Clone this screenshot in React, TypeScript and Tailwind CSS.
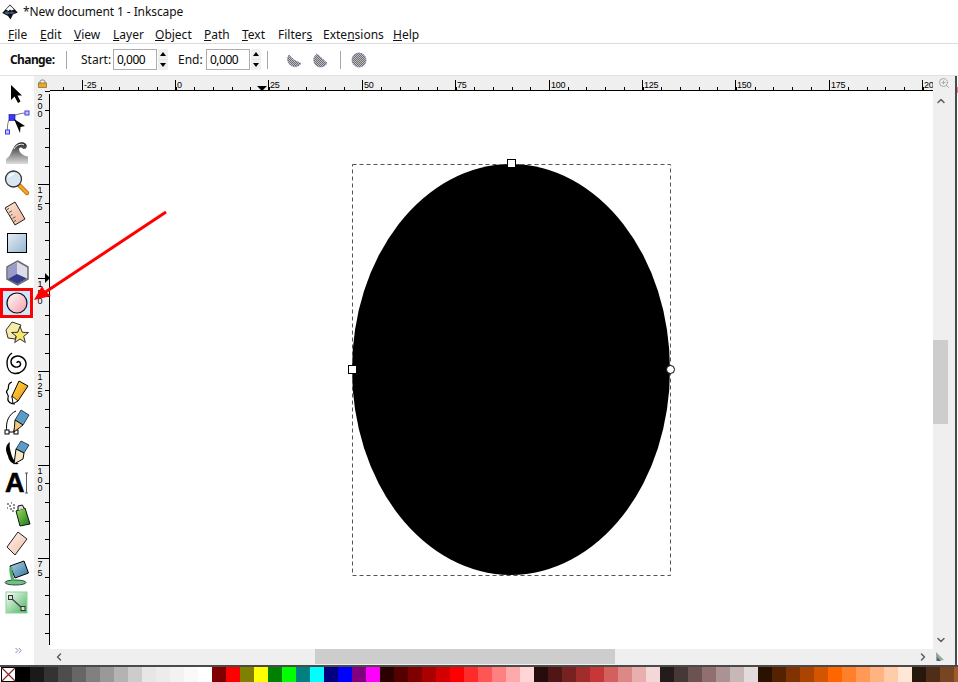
import type { ReactNode } from "react";
import { ChevronDown, ChevronLeft, ChevronRight, ChevronUp, ChevronsRight, ZoomIn } from "lucide-react";

const menus = [
  { pre: "", u: "F", post: "ile", w: "w-[32px]" },
  { pre: "", u: "E", post: "dit", w: "w-[34px]" },
  { pre: "", u: "V", post: "iew", w: "w-[39px]" },
  { pre: "", u: "L", post: "ayer", w: "w-[42px]" },
  { pre: "", u: "O", post: "bject", w: "w-[49px]" },
  { pre: "", u: "P", post: "ath", w: "w-[38px]" },
  { pre: "", u: "T", post: "ext", w: "w-[36px]" },
  { pre: "Filter", u: "s", post: "", w: "w-[45px]" },
  { pre: "Exte", u: "n", post: "sions", w: "w-[70px]" },
  { pre: "", u: "H", post: "elp", w: "w-[30px]" },
];

const palette = [
  "#000000", "#1a1a1a", "#333333", "#4d4d4d", "#666666", "#808080", "#999999", "#b3b3b3", "#cccccc", "#e6e6e6", "#ececec", "#f2f2f2", "#f9f9f9", "#ffffff",
  "#800000", "#ff0000", "#808000", "#ffff00", "#008000", "#00ff00", "#008080", "#00ffff", "#000080", "#0000ff", "#800080", "#ff00ff",
  "#2b0000", "#550000", "#800000", "#aa0000", "#d40000", "#ff0000", "#ff2a2a", "#ff5555", "#ff8080", "#ffaaaa", "#ffd5d5",
  "#280b0b", "#501616", "#782121", "#a02c2c", "#c83737", "#d35f5f", "#de8787", "#e9afaf", "#f4d7d7",
  "#241c1c", "#483737", "#6c5353", "#916f6f", "#ac9393", "#c8b7b7", "#e3dbdb",
  "#2b1100", "#552200", "#803300", "#aa4400", "#d45500", "#ff6600", "#ff7f2a", "#ff9955", "#ffb380", "#ffccaa", "#ffe6d5",
  "#28170b", "#502d16", "#784421", "#a05a2c",
];

function Grad({ id, from, to, diag = true }: { id: string; from: string; to: string; diag?: boolean }) {
  return (
    <linearGradient id={id} x1="0" y1="0" x2={diag ? "1" : "0"} y2="1">
      <stop offset="0" stopColor={from} />
      <stop offset="1" stopColor={to} />
    </linearGradient>
  );
}

// tool icons, drawn in a 34x30 box
const tools: ReactNode[] = [
  <path d="M11 7V22L14.5 18.5L18 25L20.5 23.5L17.5 17.5L22 17.5Z" fill="#000" />,
  <>
    <path d="M7.5 24C7 17 8 11 12 9C17 6 21 5 27 5" fill="none" stroke="#777" strokeWidth="1" />
    <rect x="9" y="6.5" width="6" height="6" fill="#3a3af0" stroke="#1a1ac0" strokeWidth="0.7" />
    <rect x="25" y="3" width="4" height="4" fill="#c8c8ff" stroke="#3a3af0" />
    <rect x="5.5" y="22" width="4" height="4" fill="#c8c8ff" stroke="#3a3af0" />
    <path d="M14 11L25 18L20.5 19L20 25Z" fill="#000" />
  </>,
  <>
    <defs><Grad id="tw" from="#222222" to="#dddddd" diag={false} /></defs>
    <path d="M6 26V21C10 19 11 14 14 9C17 4 23 3 26 6C28 9 26 11.5 23 11C22 9 19.5 9 19 11C19 15 24 18 28 18.5V26Z" fill="url(#tw)" />
    <path d="M14 11C16 7 21 5 24 7" fill="none" stroke="#fff" strokeWidth="1" />
  </>,
  <>
    <path d="M19 17L27 25" stroke="#b87000" strokeWidth="4.5" strokeLinecap="round" />
    <path d="M20 18L27 25" stroke="#f5a623" strokeWidth="2.5" strokeLinecap="round" />
    <circle cx="13.5" cy="11" r="8" fill="#d8e8f2" stroke="#333" strokeWidth="1.3" />
    <path d="M9 9C10 7 12 6 14 6" fill="none" stroke="#fff" strokeWidth="1.5" />
  </>,
  <>
    <defs><Grad id="me" from="#fbe2d4" to="#f0b498" /></defs>
    <path d="M5 10L15 4L25 21L15 27Z" fill="url(#me)" stroke="#222" strokeWidth="1" />
    <path d="M7 11.5L9 10.3M9 14.5L12 12.8M10.5 17.5L12.5 16.3M12.5 20.5L15.5 18.8M14 23.5L16 22.3" stroke="#333" strokeWidth="0.8" />
  </>,
  <>
    <defs><Grad id="re" from="#e4edf4" to="#95b5d2" /></defs>
    <rect x="7.5" y="5.5" width="19" height="19" fill="url(#re)" stroke="#000" strokeWidth="1" />
  </>,
  <>
    <path d="M17.5 3L28 9V21L17.5 27L7 21V9Z" fill="#dcdcea" stroke="#6a6a6a" strokeWidth="1.5" />
    <path d="M8 9.5L17 4.5V17L8 21Z" fill="#9a9acb" />
    <path d="M8 21L17 16L27 20.5L17.5 26Z" fill="#343a8c" />
  </>,
  <>
    <defs><Grad id="el" from="#ffffff" to="#f59aa8" /></defs>
    <circle cx="17" cy="15" r="10" fill="url(#el)" stroke="#111" strokeWidth="1.2" />
  </>,
  <>
    <path d="M6 12L12 4L21 7L15 21L8 20Z" fill="#f7eba8" stroke="#333" strokeWidth="1" />
    <path d="M20 8.5L22.3 14.3L28.5 14.5L23.7 18.3L25.3 24.5L20 21L14.7 24.5L16.3 18.3L11.5 14.5L17.7 14.3Z" fill="#f5e76e" stroke="#333" strokeWidth="1" />
  </>,
  <path d="M17 15C17 13 20 13 20.5 15.5C21 18.5 17 20 14 18.5C10 16.5 10 11 14 9C19 6.5 25 9.5 26 15C26.5 21 20.5 26 14.5 25.5C10 25 7 21 7 15C7 10 9 7 12 5" fill="none" stroke="#000" strokeWidth="1.4" />,
  <>
    <path d="M12 4C6 6 10 10 7.5 12C4 15 10 16 8 20C7 24 11 26 15 26" fill="none" stroke="#000" strokeWidth="1.2" />
    <defs><Grad id="pe" from="#ffe04a" to="#ee8408" /></defs>
    <path d="M19 3L28 8L18 23L13 25.5L12 18Z" fill="url(#pe)" stroke="#000" strokeWidth="1" />
    <path d="M12 18L18 23L13 25.5Z" fill="#fff" stroke="#000" strokeWidth="0.8" />
  </>,
  <>
    <path d="M7 24C5 14 9 6 16 3" fill="none" stroke="#000" strokeWidth="1" />
    <path d="M7 24H16" stroke="#000" strokeWidth="1" />
    <rect x="5" y="22" width="4" height="4" fill="#fff" stroke="#000" />
    <rect x="14" y="22" width="4" height="4" fill="#fff" stroke="#000" />
    <path d="M21 2L29 7L23 17L15 12Z" fill="#5b9bc8" stroke="#123" strokeWidth="0.8" />
    <path d="M15 12L23 17L14 24Z" fill="#f0c878" stroke="#000" strokeWidth="0.9" />
  </>,
  <>
    <path d="M10 4C4 8 6 14 8 18C9 23 12 27 19 26C14 24 12 19 11 15C10 11 9 8 10 4Z" fill="#000" />
    <path d="M21 3L29 7L24 15L16 11Z" fill="#5b9bc8" stroke="#123" strokeWidth="0.8" />
    <path d="M16 11L24 15L23 21L14 26Z" fill="#f6e8c4" stroke="#000" strokeWidth="1" />
  </>,
  <>
    <text x="5" y="24" fontFamily="Liberation Sans, sans-serif" fontWeight="700" fontSize="27" fill="#000" stroke="#000" strokeWidth="0.6">A</text>
    <path d="M25 5H28M26.5 5V25M25 25H28" stroke="#333" strokeWidth="0.8" fill="none" />
  </>,
  <>
    <defs><Grad id="sp" from="#9fe35c" to="#167516" /></defs>
    <path d="M7 6H9M11 5H12M9 8H11M13 7H15M7 10H8M10 11H12M13 10H15M12 13H14" stroke="#222" strokeWidth="1.2" />
    <path d="M16 13L25 10L30 26L20 28Z" fill="url(#sp)" stroke="#111" strokeWidth="1" />
    <path d="M18 12.5V8L22.5 7L24 10.5" fill="#ddd" stroke="#111" strokeWidth="1" />
  </>,
  <>
    <defs><Grad id="er" from="#fff4ee" to="#f2bca2" /></defs>
    <path d="M7 19L18 4L27 11L15 27Z" fill="url(#er)" stroke="#222" strokeWidth="1" />
  </>,
  <>
    <defs><Grad id="bu" from="#b4d4e6" to="#2e729f" /></defs>
    <ellipse cx="15.5" cy="24.5" rx="10.5" ry="2.5" fill="#6fc481" stroke="#123" strokeWidth="0.8" />
    <path d="M10 8L24 3L28.5 15L15 20Z" fill="url(#bu)" stroke="#000" strokeWidth="1" />
    <path d="M11 9C10 14 12 18 13 23" fill="none" stroke="#4fae60" strokeWidth="3" />
  </>,
  <>
    <defs><Grad id="gr" from="#ffffff" to="#45b35a" /></defs>
    <rect x="6" y="4" width="21" height="21" fill="url(#gr)" stroke="#8fd09a" strokeWidth="1" />
    <path d="M11 10L23 21" stroke="#444" strokeWidth="1.2" />
    <rect x="8.5" y="7.5" width="4" height="4" fill="#ddd" stroke="#333" />
    <rect x="21" y="18.5" width="4" height="4" fill="#ddd" stroke="#333" />
  </>,
];

const MAJOR = 93.4;
const STEP = MAJOR / 5;

// top ruler runs from x=50 to x=933 of the page
function HRuler() {
  const ticks: number[] = [];
  for (let k = -7; k < 50; k++) ticks.push(175.5 + k * STEP - 50);
  const labels = [-25, 0, 25, 50, 75, 100, 125, 150, 175, 200];
  return (
    <svg width="883" height="15" className="block shrink-0">
      <path d="M0 14.5H883" stroke="#000" />
      {ticks.filter((x) => x > 2 && x < 883).map((x) => (
        <path key={x} d={`M${Math.round(x) + 0.5} 14V11`} stroke="#000" />
      ))}
      {labels.map((n, i) => {
        const x = Math.round(81.5 + i * MAJOR - 50);
        return (
          <g key={n}>
            <path d={`M${x + 0.5} 14V4`} stroke="#000" />
            <text x={x + 2} y="12" fontSize="9" fontFamily="Liberation Sans, sans-serif" fill="#000" letterSpacing="-0.3">{n === 200 ? "20" : n}</text>
          </g>
        );
      })}
      <path d="M207 10H217L212 15Z" fill="#000" />
    </svg>
  );
}

// left ruler runs from y=91 down to y=649 of the page
function VRuler() {
  const ticks: number[] = [];
  for (let k = 0; k < 30; k++) ticks.push(k * STEP);
  const labels = ["200", "175", "150", "125", "100", "75"];
  return (
    <svg width="16" height="558" className="block shrink-0">
      <path d="M15.5 3V554" stroke="#000" />
      {ticks.filter((y) => y < 554).map((y) => (
        <path key={y} d={`M11 ${Math.round(y) + 0.5}H16`} stroke="#000" />
      ))}
      {labels.map((n, i) => {
        const y = Math.round(i * MAJOR);
        return (
          <g key={n}>
            {i > 0 && <path d={`M4 ${y + 0.5}H16`} stroke="#000" />}
            {n.split("").map((d, j) => (
              <text key={j} x="3.5" y={y + 9 + j * 8.5} fontSize="9" fontFamily="Liberation Sans, sans-serif" fill="#000">{d}</text>
            ))}
          </g>
        );
      })}
      <path d="M11 182L16 187L11 192Z" fill="#000" />
    </svg>
  );
}

function Spin() {
  return (
    <div className="ml-px flex h-[21px] w-[10px] flex-col gap-px bg-[#e4e4e4]">
      <div className="flex h-[10px] items-center justify-center bg-[#f0f0f0]">
        <div className="h-0 w-0 border-x-[3px] border-b-[4px] border-x-transparent border-b-black" />
      </div>
      <div className="flex h-[10px] items-center justify-center bg-[#f0f0f0]">
        <div className="h-0 w-0 border-x-[3px] border-t-[4px] border-x-transparent border-t-black" />
      </div>
    </div>
  );
}

function NumField() {
  return (
    <div className="flex h-[21px] w-[44px] items-center border border-[#adadad] bg-white pl-[3px] text-[12px] tracking-[-0.5px] text-black">0,000</div>
  );
}

function ArcIcon({ d, id }: { d: string; id: string }) {
  return (
    <svg width="16" height="16" viewBox="0 0 16 16" className="block">
      <defs>
        <pattern id={id} width="2" height="2" patternUnits="userSpaceOnUse">
          <rect width="2" height="2" fill="#bdbdbd" />
          <rect width="1" height="1" fill="#6f6f6f" />
          <rect x="1" y="1" width="1" height="1" fill="#6f6f6f" />
        </pattern>
      </defs>
      <path d={d} fill={`url(#${id})`} stroke="#5a5aa8" strokeWidth="0.8" strokeDasharray="1.5 0.8" />
    </svg>
  );
}

function Sep() {
  return <div className="h-[18px] w-px bg-[#a8a8a8]" />;
}

export default function App() {
  return (
    <div className="relative flex h-[682px] w-[958px] flex-col overflow-hidden bg-white font-['Noto_Sans',sans-serif] text-[12px] text-[#111]">
      {/* title bar */}
      <div className="flex h-[25px] items-center pl-[2px] pb-[2px]">
        <svg width="16" height="16" viewBox="0 0 16 16" className="block">
          <path d="M8 0.5L15.8 8.5L11 10.5L8.5 15.5L6 12L0.2 9Z" fill="#111" />
          <path d="M8 1.5L12 5.5L9.5 6.5L8 5.5L6.5 7L4 5.5Z" fill="#fff" />
          <path d="M2 9L5 7L7 8.5L10 7.5L13.5 9L10 10L8 9.5L5.5 10.5Z" fill="#3d5a80" />
        </svg>
        <span className="ml-[5px] text-[12px] tracking-[-0.1px]">*New document 1 - Inkscape</span>
      </div>

      {/* menu */}
      <div className="flex h-[19px] shrink-0 items-center border-b border-[#dcdcdc] pt-px pl-[8px]">
        {menus.map((m) => (
          <div key={m.u + m.post} className={m.w}>
            {m.pre}<u>{m.u}</u>{m.post}
          </div>
        ))}
      </div>

      {/* tool controls */}
      <div className="flex h-[31px] shrink-0 items-center pl-[10px]">
        <span className="w-[56px] font-bold tracking-[-0.6px]">Change:</span>
        <Sep />
        <span className="ml-[14px] w-[32px]">Start:</span>
        <NumField />
        <Spin />
        <span className="ml-[10px] w-[28px]">End:</span>
        <NumField />
        <Spin />
        <div className="ml-[6px]"><Sep /></div>
        <div className="ml-[18px]"><ArcIcon id="a1" d="M3 3A7 7 0 1 0 15 11.5L8 8Z" /></div>
        <div className="ml-[10px]"><ArcIcon id="a2" d="M5 2A7 7 0 1 0 15 11Z" /></div>
        <div className="ml-[12px]"><Sep /></div>
        <div className="ml-[10px]"><ArcIcon id="a3" d="M15 8A7 7 0 1 1 1 8A7 7 0 1 1 15 8Z" /></div>
      </div>

      {/* workspace */}
      <div className="flex h-[590px] shrink-0 border-t border-[#e2e2e2]">
        <div className="flex w-[34px] shrink-0 flex-col pt-[2px]">
          {tools.map((icon, i) => (
            <div key={i} className={i === 7 ? "relative h-[30px] w-[33px] bg-[#cce8ff]" : "relative h-[30px]"}>
              <svg width="34" height="30" viewBox="0 0 34 30" className="block">{icon}</svg>
              {i === 7 && <div className="absolute inset-0 border-[3px] border-[#ff0000]" />}
            </div>
          ))}
          <div className="mt-[27px] flex justify-center pl-[2px]">
            <ChevronsRight size={11} strokeWidth={2} className="text-[#7d7db5]" />
          </div>
        </div>

        <div className="flex w-[921px] shrink-0 flex-col bg-[#efefef]">
          <div className="flex h-[15px] shrink-0">
            <div className="flex w-[16px] shrink-0 justify-center pt-[3px]">
              <svg width="9" height="9" viewBox="0 0 9 9" className="block">
                <path d="M2 4V2.5C2 0.5 7 0.5 7 2.5V4" fill="none" stroke="#777" strokeWidth="1" />
                <rect x="0.5" y="4" width="8" height="4.5" fill="#e8a830" stroke="#8a6410" strokeWidth="0.7" />
              </svg>
            </div>
            <HRuler />
            <div className="flex flex-1 justify-center pt-px pr-[1px]">
              <ZoomIn size={12} strokeWidth={2} className="text-[#a8a8a8]" />
            </div>
          </div>

          <div className="flex h-[558px] shrink-0">
            <VRuler />
            <div className="h-full w-[883px] shrink-0 bg-white">
              <svg width="883" height="558" viewBox="50 91 883 558" className="block">
                <ellipse cx="511" cy="369.5" rx="159" ry="205.5" fill="#000" />
                <rect x="352.5" y="164.5" width="318" height="411" fill="none" stroke="#555" strokeWidth="1" strokeDasharray="4 3" />
                <rect x="507.5" y="159.5" width="8" height="8" fill="#fff" stroke="#000" />
                <rect x="348.5" y="365.5" width="8" height="8" fill="#fff" stroke="#000" />
                <circle cx="670.5" cy="369.5" r="4" fill="#fff" stroke="#000" />
              </svg>
            </div>
            <div className="flex w-[22px] flex-col pr-[7px]">
              <div className="flex h-[18px] items-center justify-center pt-[1px]">
                <ChevronUp size={12} strokeWidth={3} className="text-[#5e5e5e]" />
              </div>
              <div className="mt-[231px] h-[84px] bg-[#cdcdcd]" />
              <div className="mt-[207px] flex h-[18px] items-center justify-center">
                <ChevronDown size={12} strokeWidth={3} className="text-[#5e5e5e]" />
              </div>
            </div>
          </div>

          <div className="flex h-[16px] shrink-0 items-start">
            <div className="ml-[18px] flex h-[15px] w-[14px] items-center justify-center">
              <ChevronLeft size={12} strokeWidth={3} className="text-[#5e5e5e]" />
            </div>
            <div className="ml-[249px] h-[15px] w-[300px] bg-[#cdcdcd]" />
            <div className="ml-[301px] flex h-[15px] w-[14px] items-center justify-center">
              <ChevronRight size={12} strokeWidth={3} className="text-[#5e5e5e]" />
            </div>
            <svg width="10" height="10" viewBox="0 0 10 10" className="ml-[5px] mt-[3px] block">
              <path d="M1 0L9 8L1 9Z" fill="#8fae8f" />
              <path d="M2 5L6 9H2Z" fill="#6a4fa0" />
            </svg>
          </div>
        </div>

        <div className="w-[3px] shrink-0 border-l-2 border-[#4a4a4a] bg-white">
          <div className="mt-[11px] h-[6px] w-px bg-[#f08080]" />
        </div>
      </div>

      {/* palette */}
      <div className="h-[2px] shrink-0 bg-[#4a4a4a]" />
      <div className="flex h-[15px] shrink-0">
        <svg width="16" height="15" viewBox="0 0 16 15" className="block shrink-0">
          <rect x="1.5" y="0.5" width="14" height="14" fill="#fff" stroke="#000" />
          <path d="M2 1L15 14M15 1L2 14" stroke="#8a2a2a" strokeWidth="1.2" />
        </svg>
        {palette.map((c, i) => (
          <div key={i} className="h-full w-[14px] shrink-0" style={{ backgroundColor: c }} />
        ))}
      </div>

      {/* red arrow annotation lying over the window */}
      <svg width="958" height="682" className="pointer-events-none absolute left-0 top-0">
        <path d="M166 212L44 293" stroke="#ff0000" strokeWidth="3" />
        <path d="M34 300L42 286L45 291L51 296Z" fill="#ff0000" />
      </svg>
    </div>
  );
}
